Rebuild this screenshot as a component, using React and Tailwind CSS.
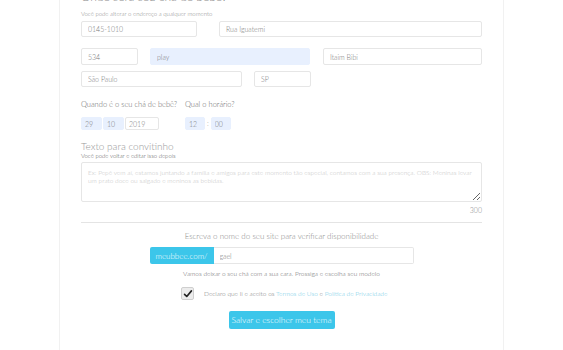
import React from 'react';

const font = { fontFamily: 'Lato, "Open Sans", sans-serif' };

const field = 'block h-full w-full rounded-[2px] border text-[7px] font-light text-[#777] outline-none';

const Field = ({ value, className = '', filled = false, tight = false }) => (
  <div className={`h-full ${className}`}>
    <input
      readOnly
      defaultValue={value}
      className={`${field} ${tight ? 'px-[3px]' : 'px-[6px]'} ${filled ? 'border-[#e8f0fe] bg-[#e8f0fe]' : 'border-[#e6e6e6] bg-white'}`}
    />
  </div>
);

export default function App() {
  return (
    <div className="h-[350px] overflow-hidden bg-white" style={font}>
      <div className="ml-[59px] flex h-full w-[445px] flex-col border-x border-[#f1f1f1] px-[21px] font-light text-[#777]">
        <h2 className="-mt-[10px] h-[14px] shrink-0 text-[12px] leading-[14px] text-[#888]">Onde será seu chá de bebê?</h2>
        <p className="mt-[6px] h-[8px] shrink-0 text-[6px] leading-[8px] text-[#888]">Você pode alterar o endereço a qualquer momento</p>

        <div className="mt-[3px] flex h-[16px] shrink-0 gap-[22px]">
          <Field value="0145-1010" className="w-[116px]" />
          <Field value="Rua Iguatemi" className="flex-1" />
        </div>

        <div className="mt-[11px] flex h-[17px] shrink-0">
          <Field value="534" className="w-[57px]" />
          <Field value="play" filled className="ml-[12px] w-[160px]" />
          <Field value="Itaim Bibi" className="ml-[13px] flex-1" />
        </div>

        <div className="mt-[6px] flex h-[16px] shrink-0">
          <Field value="São Paulo" className="w-[161px]" />
          <Field value="SP" className="ml-[12px] w-[57px]" />
        </div>

        <div className="mt-[13px] flex h-[10px] shrink-0 text-[7.5px] leading-[10px] text-[#666]">
          <span className="w-[104px] shrink-0 whitespace-nowrap">Quando é o seu chá de bebê?</span>
          <span className="whitespace-nowrap">Qual o horário?</span>
        </div>

        <div className="mt-[7px] flex h-[13px] shrink-0 items-center">
          <Field value="29" filled tight className="w-[21px]" />
          <Field value="10" filled tight className="ml-[1px] w-[21px]" />
          <Field value="2019" tight className="ml-[1px] w-[34px]" />
          <Field value="12" filled tight className="ml-[26px] w-[20px]" />
          <span className="mx-[2px] text-[7px] leading-[13px] text-[#999]">:</span>
          <Field value="00" filled tight className="w-[20px]" />
        </div>

        <h3 className="mt-[10px] h-[12px] shrink-0 text-[10px] leading-[12px] text-[#999]">Texto para convitinho</h3>
        <p className="h-[8px] shrink-0 text-[6px] leading-[8px] text-[#555]">Você pode voltar e editar isso depois</p>

        <textarea
          className="mt-[2px] block h-[40px] w-full shrink-0 rounded-[2px] border border-[#e6e6e6] px-[6px] py-[6px] text-[6.5px] leading-[8px] font-light text-[#777] outline-none placeholder:text-[#c4c4c4]"
          placeholder="Ex: Pepê vem aí, estamos juntando a família e amigos para este momento tão especial, contamos com a sua presença. OBS: Meninas levar um prato doce ou salgado e meninos as bebidas."
        />
        <div className="mt-[4px] h-[9px] shrink-0 text-right text-[7px] leading-[9px] text-[#888]">300</div>

        <div className="mt-[7px] shrink-0 border-t border-[#e4e4e4]" />

        <p className="mt-[8px] h-[10px] shrink-0 text-center text-[8px] leading-[10px] text-[#888]">
          Escreva o nome do seu site para verificar disponibilidade
        </p>

        <div className="mt-[6px] flex h-[17px] shrink-0 justify-center">
          <div className="flex w-[264px]">
            <span className="flex w-[64px] items-center justify-center rounded-l-[2px] bg-[#3cc6ea] text-[8px] text-white">
              meubbee.com/
            </span>
            <input
              readOnly
              defaultValue="gael"
              className="h-full flex-1 rounded-r-[2px] border border-l-0 border-[#e6e6e6] px-[6px] text-[7px] font-light text-[#777] outline-none"
            />
          </div>
        </div>

        <p className="mt-[6px] h-[8px] shrink-0 text-center text-[6.5px] leading-[8px] text-[#666]">
          Vamos deixar o seu chá com a sua cara. Prossiga e escolha seu modelo
        </p>

        <div className="mt-[9px] flex h-[13px] shrink-0 items-center pl-[100px]">
          <span className="flex h-[13px] w-[13px] items-center justify-center rounded-[2px] border border-[#cfcfcf] bg-[#ececec]">
            <svg viewBox="0 0 16 16" className="h-[10px] w-[10px]">
              <path d="M2.5 8.5 L6 12 L13.5 3" fill="none" stroke="#222" strokeWidth="2.6" strokeLinecap="round" strokeLinejoin="round" />
            </svg>
          </span>
          <span className="ml-[10px] text-[6.5px] text-[#777]">
            Declaro que li e aceito os <span className="text-[#6cc9e6]">Termos de Uso</span> e{' '}
            <span className="text-[#6cc9e6]">Política de Privacidade</span>
          </span>
        </div>

        <div className="mt-[11px] flex shrink-0 justify-center">
          <button className="h-[18px] w-[106px] rounded-[2px] bg-[#3cc6ea] text-[8.5px] text-white">
            Salvar e escolher meu tema
          </button>
        </div>
      </div>
    </div>
  );
}
